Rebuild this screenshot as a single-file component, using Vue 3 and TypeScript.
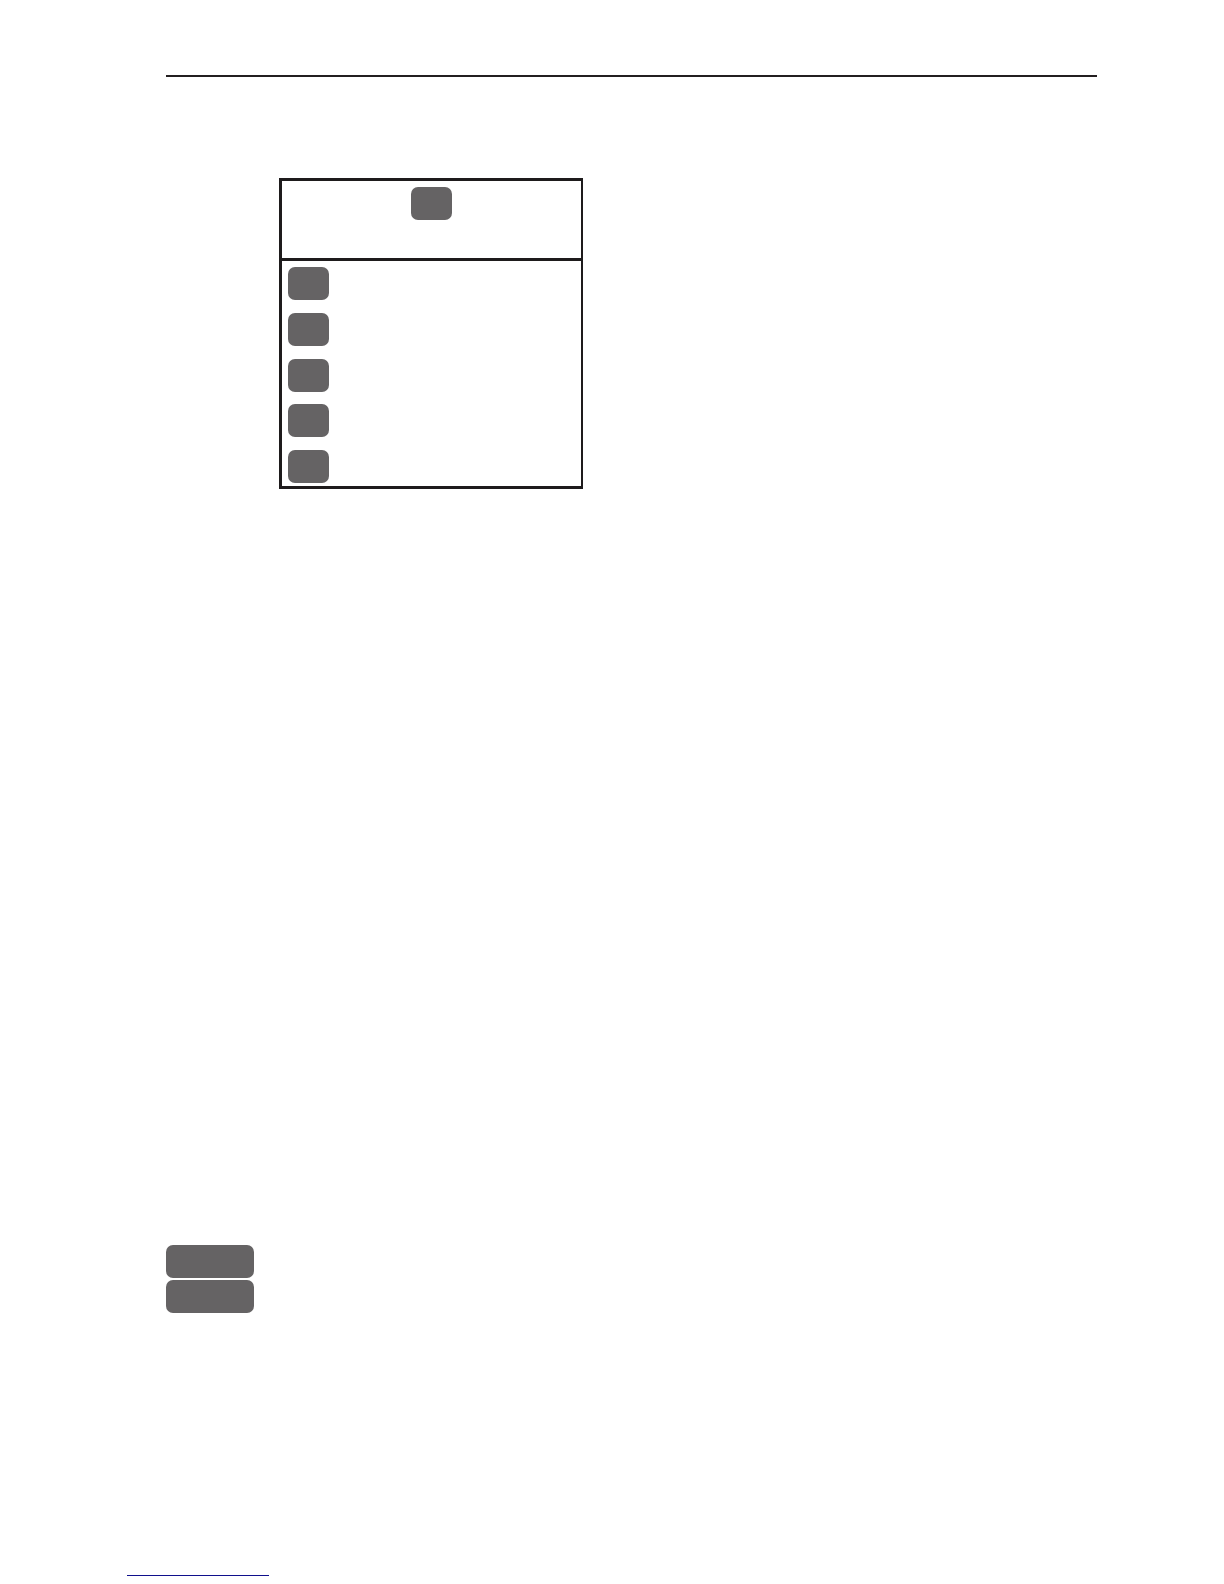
<script setup lang="ts">
interface Key {
  id: string
  label: string
}

const menuKeys: Key[] = [1, 2, 3, 4, 5].map((n) => ({ id: `menu-${n}`, label: `Key ${n}` }))

const sideKeys: Key[] = [
  { id: 'side-upper', label: 'Upper key' },
  { id: 'side-lower', label: 'Lower key' },
]
</script>

<template>
  <div class="page">
    <header class="page-header">
      <hr class="rule" />
    </header>

    <main class="content">
      <section class="panel" aria-label="Menu">
        <div class="panel-head">
          <button type="button" class="key" aria-label="Menu key"></button>
        </div>
        <ul class="panel-list">
          <li v-for="key in menuKeys" :key="key.id" class="panel-item">
            <button type="button" class="key" :aria-label="key.label"></button>
          </li>
        </ul>
      </section>

      <div class="side-keys">
        <button
          v-for="key in sideKeys"
          :key="key.id"
          type="button"
          class="key key-wide"
          :aria-label="key.label"
        ></button>
      </div>
    </main>

    <footer class="page-footer">
      <a class="footer-link" href="#" aria-label="Back to top"></a>
    </footer>
  </div>
</template>

<style>
body {
  margin: 0;
  background: #ffffff;
}
</style>

<style scoped>
.page {
  box-sizing: border-box;
  display: flex;
  flex-direction: column;
  min-height: 100vh;
  padding-top: 75px;
  font-family: "Liberation Sans", sans-serif;
}

.page-header,
.content {
  padding: 0 127px 0 166px;
}

.rule {
  height: 2px;
  margin: 0;
  border: 0;
  background: #231f20;
}

.content {
  display: flex;
  flex-direction: column;
  align-items: flex-start;
  gap: 756px;
  padding-top: 101px;
}

.panel {
  box-sizing: border-box;
  width: 304px;
  max-width: 100%;
  margin-left: 113px;
  border: 3px solid #1e1b1c;
  border-right-width: 2px;
}

.panel-head {
  display: flex;
  justify-content: center;
  padding: 6px 6px 38px;
  border-bottom: 3px solid #1e1b1c;
}

.panel-list {
  display: flex;
  flex-direction: column;
  justify-content: space-between;
  min-height: 216px;
  margin: 0;
  padding: 6px 6px 3px;
  list-style: none;
}

.panel-item {
  display: flex;
}

.key {
  display: block;
  width: 41px;
  height: 33px;
  padding: 0;
  border: 0;
  border-radius: 7px;
  background: #656364;
}

.side-keys {
  display: flex;
  flex-direction: column;
  gap: 2px;
}

.key-wide {
  width: 88px;
}

.page-footer {
  display: flex;
  margin-top: auto;
  padding: 0 127px 8px;
}

.footer-link {
  width: 142px;
  height: 16px;
  border-bottom: 1px solid #10108c;
}
</style>
